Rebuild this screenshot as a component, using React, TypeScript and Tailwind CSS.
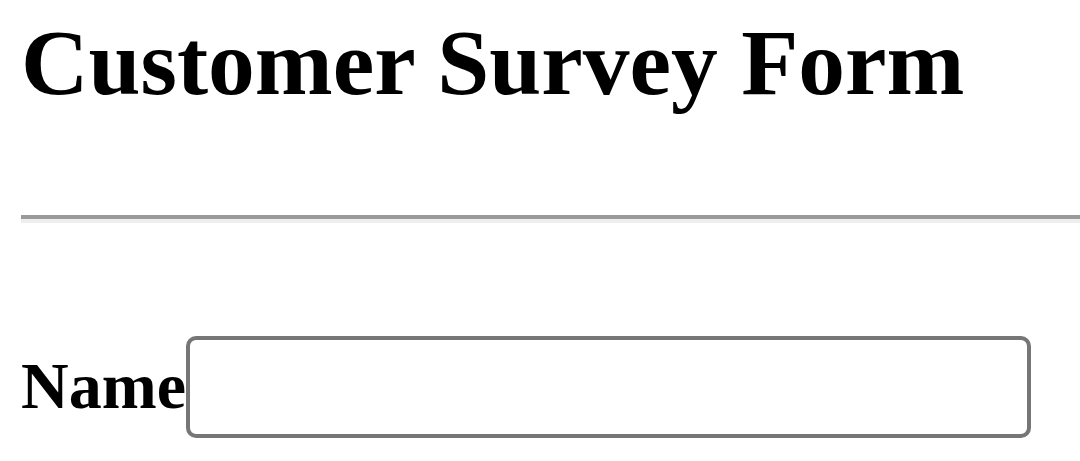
export default function App() {
  return (
    <div className="min-h-screen bg-white pl-[21px] text-black overflow-hidden" style={{ fontFamily: '"Liberation Serif", "Times New Roman", serif' }}>
      {/* Heading */}
      <h1 className="pt-[11px] text-[93.5px] font-bold leading-[104px] whitespace-nowrap">Customer Survey Form</h1>

      <hr className="mt-[100px] border-t-4 border-b-4 border-x-0 border-t-[#9a9a9a] border-b-[#eeeeee]" />

      {/* Form */}
      <form className="mt-[113px] flex items-start">
        <label htmlFor="name" className="mt-[13px] text-[66px] font-bold leading-[73px]">
          Name
        </label>
        <input
          id="name"
          type="text"
          className="h-[102px] w-[845px] rounded-[10px] border-4 border-[#767676] bg-white px-3 text-[48px] outline-none"
        />
      </form>
    </div>
  );
}
